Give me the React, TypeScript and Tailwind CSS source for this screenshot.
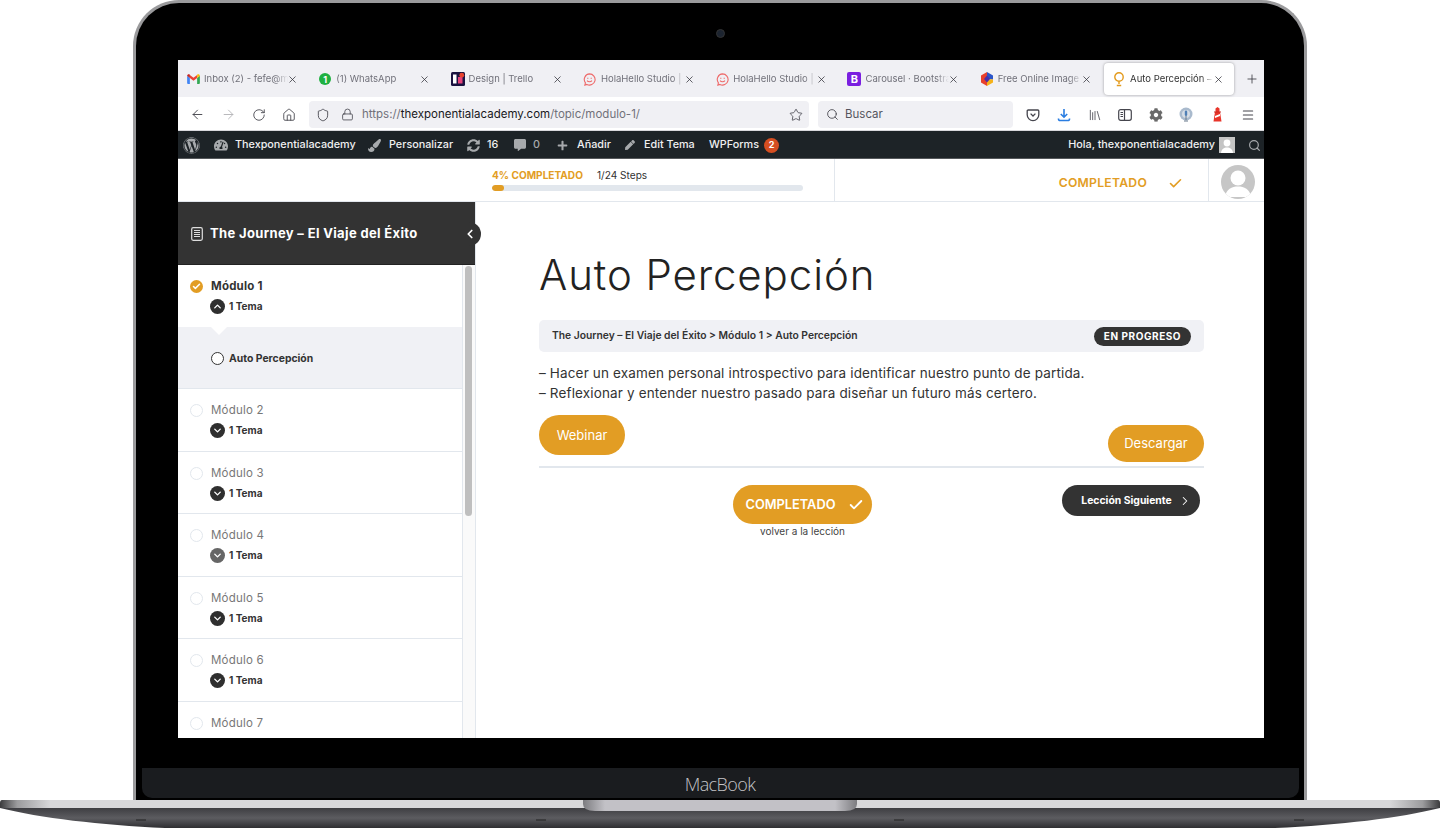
import { ArrowLeft, ArrowRight, RotateCw, Home, Shield, Lock, Star, Search, Library, Menu, X, Plus, Check, ChevronLeft, ChevronRight, ChevronUp, ChevronDown } from 'lucide-react';
import { FaWordpress, FaTachometerAlt, FaPaintBrush, FaSyncAlt, FaCommentAlt, FaPlus, FaPen, FaCog } from 'react-icons/fa';

const ui = "font-['Inter',sans-serif]";

function Gmail() {
  return (
    <svg width="13" height="10" viewBox="0 0 14 11" className="shrink-0">
      <path d="M0 2v8a1 1 0 0 0 1 1h2V4.5z" fill="#4285f4" />
      <path d="M14 2v8a1 1 0 0 1-1 1h-2V4.5z" fill="#34a853" />
      <path d="M3 4.5 7 7.5l4-3V1L7 4 3 1z" fill="#ea4335" />
      <path d="M0 2c0-1.6 1.9-2.2 3-1.2v3.7L0 2z" fill="#c5221f" />
      <path d="M14 2c0-1.6-1.9-2.2-3-1.2v3.7L14 2z" fill="#fbbc04" />
    </svg>
  );
}

function WhatsApp() {
  return (
    <span className="w-[12px] h-[12px] rounded-full bg-[#1fb141] flex items-center justify-center text-white text-[9px] font-bold leading-none shrink-0">1</span>
  );
}

function TrelloIcon() {
  return (
    <svg width="14" height="14" viewBox="0 0 14 14" className="shrink-0">
      <rect width="14" height="14" rx="1.5" fill="#1b1340" />
      <rect x="2" y="2.5" width="3.5" height="9" fill="#fff" />
      <rect x="7" y="5" width="4.5" height="6.5" fill="#e6447c" />
      <circle cx="10.8" cy="3.2" r="2.4" fill="#e8432e" />
    </svg>
  );
}

function HolaIcon() {
  return (
    <svg width="13" height="13" viewBox="0 0 14 14" fill="none" stroke="#ee6a6a" strokeWidth="1.2" className="shrink-0">
      <path d="M7 1a6 6 0 1 1-2.8 11.3L2 13l.6-2.4A6 6 0 0 1 7 1z" />
      <path d="M4.4 8.2c1.2 1.6 4 1.6 5.2 0M4.5 5.6h1.3M8.2 5.6h1.3" />
    </svg>
  );
}

function HexIcon() {
  return (
    <svg width="14" height="14" viewBox="0 0 14 14" className="shrink-0">
      <path d="M7 0 1 3.5v7L7 14z" fill="#e8402c" />
      <path d="M7 0l6 3.5v4L7 7z" fill="#2a55c9" />
      <path d="M7 7l6 .5v3L7 14z" fill="#f5b21a" />
      <path d="M4 7l3-3.5L10 7l-3 3.5z" fill="#4a2fa8" />
    </svg>
  );
}

function BulbIcon() {
  return (
    <svg width="12" height="15" viewBox="0 0 12 15" fill="none" stroke="#e39a1c" strokeWidth="1.4" className="shrink-0">
      <circle cx="6" cy="5" r="4.2" />
      <path d="M6 9.5V12M3.8 13.5h4.4" />
    </svg>
  );
}

function PocketIcon() {
  return (
    <svg width="14" height="14" viewBox="0 0 14 14" fill="none" stroke="#45454d" strokeWidth="1.3">
      <path d="M2.2 2h9.6a1 1 0 0 1 1 1v3.8a5.8 5.8 0 0 1-11.6 0V3a1 1 0 0 1 1-1z" />
      <path d="M4.6 5.6 7 8l2.4-2.4" />
    </svg>
  );
}

function DownloadIcon() {
  return (
    <svg width="14" height="14" viewBox="0 0 14 14" fill="none" stroke="#2a7de1" strokeWidth="1.6">
      <path d="M7 1v8M3.8 6 7 9.2 10.2 6" />
      <path d="M1.5 10.5v.5a1.5 1.5 0 0 0 1.5 1.5h8a1.5 1.5 0 0 0 1.5-1.5v-.5" />
    </svg>
  );
}

function SidebarIcon() {
  return (
    <svg width="14" height="12" viewBox="0 0 14 12" fill="none" stroke="#45454d" strokeWidth="1.2">
      <rect x=".7" y=".7" width="12.6" height="10.6" rx="2" />
      <path d="M6.5 1v10M2.5 3.5h2.5M2.5 5.5h2.5M2.5 7.5h2.5" />
    </svg>
  );
}

function MicIcon() {
  return (
    <svg width="14" height="15" viewBox="0 0 14 15">
      <circle cx="7" cy="7" r="6.5" fill="#a9bacd" />
      <circle cx="7" cy="7" r="4" fill="#d5dde6" />
      <rect x="5.8" y="3.5" width="2.4" height="5.5" rx="1.2" fill="#4f7fb5" />
      <path d="M7 9v4M5 14h4" stroke="#6a7a8c" strokeWidth="1" />
    </svg>
  );
}

function LighthouseIcon() {
  return (
    <svg width="13" height="15" viewBox="0 0 13 15">
      <path d="M4 5h5l1.5 9.5h-8z" fill="#e8352a" />
      <path d="M4.5 1.5 6.5 0l2 1.5V5h-4z" fill="#e8352a" />
      <path d="M3 4.5h7v1H3z" fill="#c92a20" />
      <path d="M4 9l5-2v2l-5 2z" fill="#fff" />
    </svg>
  );
}

function Tab({ icon, label, active }: { icon: React.ReactNode; label: string; active?: boolean }) {
  return (
    <div className={`h-[32px] shrink-0 flex items-center relative pl-[7px] mt-[1px] ${active ? 'w-[130px] bg-white rounded-[4px] shadow-[0_0_3px_rgba(0,0,0,0.35)]' : 'w-[132.3px]'}`}>
      <span className="w-[16px] flex justify-center shrink-0">{icon}</span>
      <span className={`ml-[3px] w-[84px] whitespace-nowrap text-[9.5px] [mask-image:linear-gradient(to_right,black_85%,transparent_100%)] ${active ? 'text-[#333]' : 'text-[#71717a]'}`}>{label}</span>
      <X size={11} strokeWidth={1.6} className="absolute left-[109px] text-[#2b2b33]" />
    </div>
  );
}

function AdminItem({ icon, label, className }: { icon: React.ReactNode; label: string; className: string }) {
  return (
    <div className={`flex items-center shrink-0 ${className}`}>
      {icon}
      <span>{label}</span>
    </div>
  );
}

function Tema({ open, faded }: { open?: boolean; faded?: boolean }) {
  return (
    <div className="flex items-center ml-[20px] mt-[4px]">
      <span className={`w-[15px] h-[15px] rounded-full flex items-center justify-center text-white ${faded ? 'bg-[#666]' : 'bg-[#2f2f2f]'}`}>
        {open ? <ChevronUp size={11} strokeWidth={3} /> : <ChevronDown size={11} strokeWidth={3} />}
      </span>
      <span className="ml-[4px] text-[10px] font-bold text-[#333]">1 Tema</span>
    </div>
  );
}

function Module({ n, faded, last }: { n: number; faded?: boolean; last?: boolean }) {
  return (
    <div className="h-[62.5px] shrink-0 border-b border-[#e2e7ed] pl-[12px] pt-[13px]">
      <div className="flex items-center">
        <span className="w-[13px] h-[13px] rounded-full border-[1.5px] border-[#e2e7ed] bg-white" />
        <span className="ml-[8px] text-[11.5px] text-[#777] tracking-[0.2px]">Módulo {n}</span>
      </div>
      {!last && <Tema faded={faded} />}
    </div>
  );
}

function Browser() {
  return (
    <div className={`w-[1086px] h-[678px] ml-[2px] bg-white overflow-hidden flex flex-col shrink-0 ${ui}`}>
      {/* tabs */}
      <div className="h-[37px] bg-[#f0f0f4] flex items-center shrink-0">
        <Tab icon={<Gmail />} label="Inbox (2) - fefe@m" />
        <Tab icon={<WhatsApp />} label="(1) WhatsApp" />
        <Tab icon={<TrelloIcon />} label="Design | Trello" />
        <Tab icon={<HolaIcon />} label="HolaHello Studio |" />
        <Tab icon={<HolaIcon />} label="HolaHello Studio |" />
        <Tab icon={<span className="w-[14px] h-[14px] rounded-[2px] bg-[#7a1fe0] text-white text-[11px] font-bold leading-[14px] text-center">B</span>} label="Carousel · Bootstra" />
        <Tab icon={<HexIcon />} label="Free Online Image" />
        <Tab active icon={<BulbIcon />} label="Auto Percepción –" />
        <Plus size={14} strokeWidth={1.4} className="ml-[11px] text-[#3a3a40]" />
      </div>
      {/* toolbar */}
      <div className="h-[34px] bg-white flex items-center shrink-0 pt-[2px] border-b border-[#d8d8dc]">
        <ArrowLeft size={15} strokeWidth={1.5} className="ml-[12px] text-[#45454d]" />
        <ArrowRight size={15} strokeWidth={1.5} className="ml-[16px] text-[#b4b4b8]" />
        <RotateCw size={14} strokeWidth={1.5} className="ml-[16px] text-[#45454d]" />
        <Home size={14} strokeWidth={1.5} className="ml-[16px] text-[#45454d]" />
        <div className="ml-[13px] w-[500px] h-[27px] rounded-[4px] bg-[#f0f0f4] flex items-center">
          <Shield size={14} strokeWidth={1.5} className="ml-[7px] text-[#45454d]" />
          <Lock size={13} strokeWidth={1.5} className="ml-[11px] text-[#45454d]" />
          <span className="ml-[8px] text-[11.5px] text-[#71717a] whitespace-nowrap">https://<span className="text-[#18181b]">thexponentialacademy.com</span>/topic/modulo-1/</span>
          <Star size={14} strokeWidth={1.4} className="ml-auto mr-[6px] text-[#45454d]" />
        </div>
        <div className="ml-[9px] w-[195px] h-[27px] rounded-[4px] bg-[#f0f0f4] flex items-center">
          <Search size={13} strokeWidth={1.6} className="ml-[8px] text-[#45454d]" />
          <span className="ml-[6px] text-[11.5px] text-[#55555d]">Buscar</span>
        </div>
        <div className="ml-[5px] w-[245px] grid grid-cols-8 items-center justify-items-center">
          <PocketIcon />
          <DownloadIcon />
          <Library size={14} strokeWidth={1.4} className="text-[#45454d]" />
          <SidebarIcon />
          <FaCog size={14} className="text-[#6a6a6a]" />
          <MicIcon />
          <LighthouseIcon />
          <Menu size={14} strokeWidth={1.8} className="text-[#45454d]" />
        </div>
      </div>
      {/* wp admin bar */}
      <div className="h-[28px] bg-[#1d2327] border-b border-[#55585b] flex items-center pt-[1px] shrink-0 text-[10.8px] font-medium text-[#f0f0f1] whitespace-nowrap">
        <FaWordpress size={17} className="ml-[5px] text-[#a7aaad] shrink-0" />
        <AdminItem className="ml-[14px] w-[154px]" icon={<FaTachometerAlt size={14} className="text-[#a7aaad] mr-[7px]" />} label="Thexponentialacademy" />
        <AdminItem className="w-[99px]" icon={<FaPaintBrush size={13} className="text-[#a7aaad] mr-[8px]" />} label="Personalizar" />
        <AdminItem className="w-[47px]" icon={<FaSyncAlt size={13} className="text-[#a7aaad] mr-[7px]" />} label="16" />
        <AdminItem className="w-[43px] text-[#a7aaad]" icon={<FaCommentAlt size={12} className="text-[#a7aaad] mr-[7px]" />} label="0" />
        <AdminItem className="w-[68px]" icon={<FaPlus size={11} className="text-[#a7aaad] mr-[9px]" />} label="Añadir" />
        <AdminItem className="w-[84px]" icon={<FaPen size={10} className="text-[#a7aaad] mr-[9px]" />} label="Edit Tema" />
        <span>WPForms</span>
        <span className="ml-[5px] w-[15px] h-[15px] rounded-full bg-[#d54e21] text-white text-[9px] font-bold flex items-center justify-center">2</span>
        <span className="ml-auto">Hola, thexponentialacademy</span>
        <span className="ml-[4px] w-[16px] h-[16px] bg-[#c4c4c4] overflow-hidden">
          <svg width="16" height="16" viewBox="0 0 16 16"><circle cx="8" cy="6" r="3.4" fill="#fff" /><path d="M2 16c.5-4 3-5.5 6-5.5s5.500 1.500 6 5.500z" fill="#fff" /></svg>
        </span>
        <Search size={13} strokeWidth={2.2} className="ml-[13px] mr-[3px] text-[#a7aaad]" />
      </div>
      {/* course header */}
      <div className="h-[43px] flex shrink-0 border-b border-[#e2e7ed]">
        <div className="w-[657px] pl-[314px] pt-[10px] border-r border-[#e2e7ed]">
          <div className="flex items-center text-[10.1px] leading-[12px] whitespace-nowrap">
            <span className="font-bold text-[#e29d24] w-[105px]">4% COMPLETADO</span>
            <span className="text-[#333]">1/24 Steps</span>
          </div>
          <div className="mt-[4px] w-[311px] h-[6px] rounded-full bg-[#e2e7ed] overflow-hidden">
            <div className="h-full rounded-full bg-[#e29d24]" style={{ width: '4%' }} />
          </div>
        </div>
        <div className="w-[374px] flex items-center justify-end border-r border-[#e2e7ed] pr-[25px] pt-[6px]">
          <span className="text-[12.2px] font-semibold text-[#e29d24] tracking-[0.25px]">COMPLETADO</span>
          <Check size={15} strokeWidth={2.6} className="ml-[21px] text-[#e29d24]" />
        </div>
        <div className="flex-1 flex items-center pl-[12px] pt-[3px]">
          <span className="w-[34px] h-[34px] rounded-full bg-[#c6c6c6] overflow-hidden flex items-end justify-center">
            <svg width="34" height="34" viewBox="0 0 34 34"><circle cx="17" cy="13" r="7.5" fill="#fff" /><path d="M4 32c1-8 7-10.5 13-10.5S29 24 30 32z" fill="#fff" /></svg>
          </span>
        </div>
      </div>
      {/* content */}
      <div className="flex-1 flex min-h-0">
        <aside className="w-[298px] shrink-0 flex flex-col border-r border-[#e2e7ed] relative">
          <div className="h-[63px] bg-[#333] flex items-center shrink-0 pl-[13px] pt-[1px] text-white border-b border-[#222]">
            <svg width="12" height="14" viewBox="0 0 12 14" fill="none" className="shrink-0"><rect x=".7" y=".7" width="10.6" height="12.6" rx="1.5" stroke="#ddd" strokeWidth="1.2" /><path d="M3 3.500h6M3 5.500h6M3 7.500h6M3 9.500h6" stroke="#ddd" /></svg>
            <span className="ml-[7px] text-[13px] font-bold tracking-[0.35px] whitespace-nowrap">The Journey – El Viaje del Éxito</span>
          </div>
          <span className="absolute left-[285px] top-[20px] w-[18px] h-[24px] rounded-r-full bg-[#333] flex items-center text-white">
            <ChevronLeft size={14} strokeWidth={3} />
          </span>
          <div className="flex-1 flex min-h-0">
            <div className="w-[284px] flex flex-col overflow-hidden">
              <div className="h-[62px] shrink-0 pl-[12px] pt-[13px]">
                <div className="flex items-center">
                  <span className="w-[13px] h-[13px] rounded-full bg-[#e29d24] flex items-center justify-center text-white"><Check size={9} strokeWidth={4} /></span>
                  <span className="ml-[8px] text-[11.5px] font-bold text-[#333] tracking-[0.2px]">Módulo 1</span>
                </div>
                <Tema open />
              </div>
              <div className="h-[62px] shrink-0 bg-[#f0f1f5] border-b border-[#e2e7ed] relative flex items-center pl-[33px] pt-[2px]">
                <span className="absolute left-[33px] top-0 w-0 h-0 border-x-[8px] border-x-transparent border-t-[8px] border-t-white" />
                <span className="w-[13px] h-[13px] rounded-full border-[1.5px] border-[#333] bg-white" />
                <span className="ml-[5px] text-[10.4px] font-bold text-[#333]">Auto Percepción</span>
              </div>
              <Module n={2} />
              <Module n={3} />
              <Module n={4} faded />
              <Module n={5} />
              <Module n={6} />
              <Module n={7} last />
            </div>
            <div className="w-[13px] border-l border-[#e2e7ed] bg-[#fafafa] pl-[2px] pt-[1px]">
              <div className="w-[7px] h-[250px] rounded-full bg-[#bfbfbf]" />
            </div>
          </div>
        </aside>
        <main className="flex-1 pl-[63px] pr-[60px] pt-[41px] min-w-0">
          <h1 className="text-[42px] leading-[64px] font-light text-[#222] tracking-[0.9px] whitespace-nowrap">Auto Percepción</h1>
          <div className="mt-[13px] h-[32px] rounded-[5px] bg-[#f0f1f5] flex items-center pl-[13px] pr-[13px]">
            <span className="text-[10.3px] font-semibold text-[#333] whitespace-nowrap">The Journey – El Viaje del Éxito &gt; Módulo 1 &gt; Auto Percepción</span>
            <span className="ml-auto h-[19px] w-[97px] justify-center rounded-full bg-[#333] text-white text-[10px] font-bold tracking-[0.55px] flex items-center">EN PROGRESO</span>
          </div>
          <div className="mt-[11px] text-[13.5px] leading-[20px] text-[#333] tracking-[0.15px] whitespace-nowrap">
            <p>– Hacer un examen personal introspectivo para identificar nuestro punto de partida.</p>
            <p>– Reflexionar y entender nuestro pasado para diseñar un futuro más certero.</p>
          </div>
          <div className="mt-[12px] flex justify-between items-start">
            <button className="w-[86px] h-[40px] rounded-full bg-[#e29d24] text-white text-[13px] pt-[1px]">Webinar</button>
            <button className="mt-[10px] w-[96px] h-[37px] rounded-full bg-[#e29d24] text-white text-[13px] pt-[1px]">Descargar</button>
          </div>
          <div className="mt-[4px] h-[2px] bg-[#e2e7ed]" />
          <div className="mt-[17px] flex items-start">
            <div className="ml-[194px] w-[139px] flex flex-col items-center">
              <button className="w-[139px] h-[39px] rounded-full bg-[#e29d24] text-white text-[12.8px] font-semibold flex items-center justify-center pl-[4px]">
                COMPLETADO
                <Check size={16} strokeWidth={2.8} className="ml-[12px]" />
              </button>
              <span className="text-[10px] leading-[14px] text-[#444] whitespace-nowrap">volver a la lección</span>
            </div>
            <button className="ml-[190px] w-[138px] h-[31px] rounded-full bg-[#333] text-white text-[10.4px] font-bold flex items-center justify-center pl-[11px]">
              Lección Siguiente
              <ChevronRight size={14} strokeWidth={1.8} className="ml-[6px]" />
            </button>
          </div>
        </main>
      </div>
    </div>
  );
}

function LaptopBase() {
  return (
    <svg width="1440" height="28" viewBox="0 0 1440 28" className="block shrink-0">
      <defs>
        <linearGradient id="edge" x1="0" x2="1" y1="0" y2="0">
          <stop offset="0" stopColor="#3a3a3c" />
          <stop offset="0.012" stopColor="#9c9c9e" />
          <stop offset="0.035" stopColor="#d8d8da" />
          <stop offset="0.965" stopColor="#d8d8da" />
          <stop offset="0.988" stopColor="#9c9c9e" />
          <stop offset="1" stopColor="#3a3a3c" />
        </linearGradient>
        <linearGradient id="body" x1="0" x2="0" y1="0" y2="1">
          <stop offset="0" stopColor="#3e3e42" />
          <stop offset="0.5" stopColor="#5c5c60" />
          <stop offset="1" stopColor="#2f2f32" />
        </linearGradient>
        <linearGradient id="notch" x1="0" x2="1" y1="0" y2="0">
          <stop offset="0" stopColor="#7c7c80" />
          <stop offset="0.08" stopColor="#c2c1c6" />
          <stop offset="0.92" stopColor="#c2c1c6" />
          <stop offset="1" stopColor="#7c7c80" />
        </linearGradient>
      </defs>
      <path d="M0 8 C40 18 100 25 165 28 H1275 C1340 25 1400 18 1440 8z" fill="url(#body)" />
      <path d="M2 0H1438Q1440 0 1440 3V8H0V3Q0 0 2 0z" fill="url(#edge)" />
      <path d="M583 0H857V4Q857 11 845 11H595Q583 11 583 4z" fill="url(#notch)" />
      <path d="M136 20h10M536 20h10M894 20h10M1294 20h10" stroke="#222" strokeWidth="1" />
    </svg>
  );
}

export default function App() {
  return (
    <div className="w-[1440px] h-[828px] bg-white overflow-hidden flex flex-col items-center">
      <div className="w-[1174px] h-[800px] shrink-0 rounded-t-[46px] bg-black border-x-[3px] border-t-[3px] border-[#9a9a9c] flex flex-col items-center">
        <div className="h-[57px] w-full flex items-center justify-center shrink-0 pt-[4px] pl-[1px]">
          <span className="w-[9px] h-[9px] rounded-full bg-[#1c2430] border border-[#333]" />
        </div>
        <Browser />
        <div className="mt-[30px] w-[1157px] flex-1 bg-[#1a1c1f] rounded-b-[10px] mb-[2px] flex items-center justify-center pt-[2px]">
          <span className="text-[#c5c5c8] text-[18px] font-light tracking-[-0.6px] font-['Open_Sans',sans-serif]">MacBook</span>
        </div>
      </div>
      <LaptopBase />
    </div>
  );
}
